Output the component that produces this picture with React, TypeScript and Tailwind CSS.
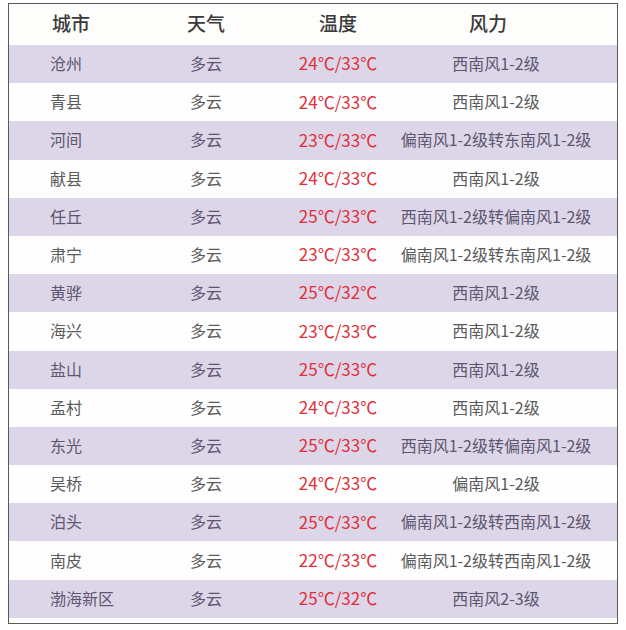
import React from "react";

type Row = { city: string; weather: string; temp: string; wind: string };

const rows: Row[] = [
  { city: "沧州", weather: "多云", temp: "24℃/33℃", wind: "西南风1-2级" },
  { city: "青县", weather: "多云", temp: "24℃/33℃", wind: "西南风1-2级" },
  { city: "河间", weather: "多云", temp: "23℃/33℃", wind: "偏南风1-2级转东南风1-2级" },
  { city: "献县", weather: "多云", temp: "24℃/33℃", wind: "西南风1-2级" },
  { city: "任丘", weather: "多云", temp: "25℃/33℃", wind: "西南风1-2级转偏南风1-2级" },
  { city: "肃宁", weather: "多云", temp: "23℃/33℃", wind: "偏南风1-2级转东南风1-2级" },
  { city: "黄骅", weather: "多云", temp: "25℃/32℃", wind: "西南风1-2级" },
  { city: "海兴", weather: "多云", temp: "23℃/33℃", wind: "西南风1-2级" },
  { city: "盐山", weather: "多云", temp: "25℃/33℃", wind: "西南风1-2级" },
  { city: "孟村", weather: "多云", temp: "24℃/33℃", wind: "西南风1-2级" },
  { city: "东光", weather: "多云", temp: "25℃/33℃", wind: "西南风1-2级转偏南风1-2级" },
  { city: "吴桥", weather: "多云", temp: "24℃/33℃", wind: "偏南风1-2级" },
  { city: "泊头", weather: "多云", temp: "25℃/33℃", wind: "偏南风1-2级转西南风1-2级" },
  { city: "南皮", weather: "多云", temp: "22℃/33℃", wind: "偏南风1-2级转西南风1-2级" },
  { city: "渤海新区", weather: "多云", temp: "25℃/32℃", wind: "西南风2-3级" },
];

const font = { fontFamily: '"Noto Sans CJK SC", "Noto Sans", sans-serif' };

export default function App() {
  return (
    <div className="w-[626px] h-[630px] bg-white pt-[3px] pl-[8px]" style={font}>
      <div className="w-[610px] h-[621px] border border-[#5a5a5a] bg-[#fdfdfb] flex flex-col">
        <div className="h-[41px] grid grid-cols-[91px_130px_134px_182px] pl-[41px] items-center text-[19px] font-medium text-[#3a3a3a] pb-[3px]">
          <div className="pl-[2px] whitespace-nowrap">城市</div>
          <div className="text-center">天气</div>
          <div className="text-center">温度</div>
          <div className="text-center pr-[16px]">风力</div>
        </div>
        {rows.map((r, i) => {
          const purple = i % 2 === 0;
          return (
            <div
              key={r.city}
              className={`h-[38.2px] grid grid-cols-[91px_130px_134px_182px] pl-[41px] items-center text-[16px] pb-[2px] ${
                purple ? "bg-[#ddd6e8] text-[#5c5670]" : "bg-[#fefefe] text-[#5a5a5a]"
              }`}
            >
              <div className="whitespace-nowrap">{r.city}</div>
              <div className="text-center">{r.weather}</div>
              <div className="text-center text-[17px] text-[#e0303c] whitespace-nowrap">{r.temp}</div>
              <div className="flex justify-center whitespace-nowrap">
                <span>{r.wind}</span>
              </div>
            </div>
          );
        })}
      </div>
    </div>
  );
}
